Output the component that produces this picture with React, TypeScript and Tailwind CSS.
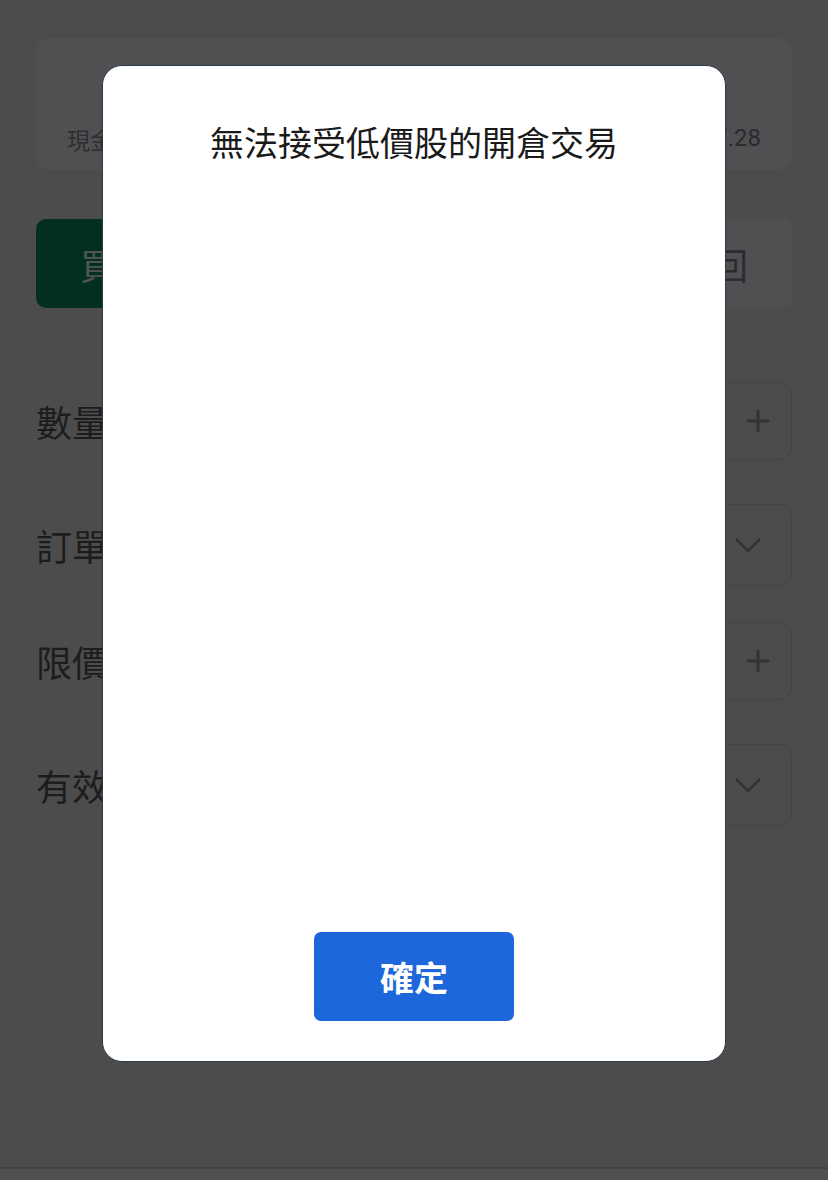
import React from "react";

const font = { fontFamily: '"Noto Sans CJK TC", "Noto Sans", sans-serif' };

function PlusIcon() {
  return (
    <svg width="26" height="26" viewBox="0 0 26 26" fill="none" stroke="#333335" strokeWidth="3" strokeLinecap="round">
      <path d="M13 3v20M3 13h20" />
    </svg>
  );
}

function ChevronIcon() {
  return (
    <svg width="28" height="16" viewBox="0 0 28 16" fill="none" stroke="#333335" strokeWidth="2.6" strokeLinecap="round" strokeLinejoin="round">
      <path d="M3 3l11 11L25 3" />
    </svg>
  );
}

function Row({ label, mt, h, icon }: { label: string; mt: string; h: string; icon: "plus" | "chev" }) {
  return (
    <div className={`flex items-center justify-between ${mt}`}>
      <div className="text-[36px] text-[#1c1c1e] leading-none">{label}</div>
      <div
        className={`w-[470px] ${h} rounded-[12px] border border-[#444446] flex items-center justify-end ${
          icon === "plus" ? "pr-[20px]" : "pr-[29px]"
        }`}
      >
        {icon === "plus" ? <PlusIcon /> : <ChevronIcon />}
      </div>
    </div>
  );
}

export default function App() {
  return (
    <div style={font} className="relative w-[828px] h-[1180px] bg-[#4c4c4c] overflow-hidden flex flex-col">
      <div className="px-[36px] pt-[38px]">
        <div className="h-[132px] rounded-[14px] bg-[#505053] flex items-end justify-between px-[31px] pb-[14px]">
          <span className="text-[23px] text-[#2e2e30]">現金結餘</span>
          <span className="text-[24px] text-[#2a2a2c]" style={{ fontFamily: '"Roboto", "Noto Sans", sans-serif' }}>1,234,567.28</span>
        </div>

        <div className="mt-[49px] h-[89px] rounded-[10px] bg-[#505053] flex">
          <div className="w-[160px] rounded-[10px] bg-[#03301e] flex items-center justify-center text-[36px] text-[#505552]">買入</div>
          <div className="flex-1 flex items-center justify-center text-[36px] text-[#2c2c2e]">賣出</div>
          <div className="flex-1 flex items-center justify-center text-[36px] text-[#2c2c2e]">沽空</div>
          <div className="w-[160px] flex items-center justify-center text-[36px] text-[#2c2c2e]">買回</div>
        </div>

        <Row label="數量" mt="mt-[74px]" h="h-[78px]" icon="plus" />
        <Row label="訂單類型" mt="mt-[44px]" h="h-[82px]" icon="chev" />
        <Row label="限價" mt="mt-[36px]" h="h-[78px]" icon="plus" />
        <Row label="有效期" mt="mt-[44px]" h="h-[82px]" icon="chev" />
      </div>

      <div className="mt-auto h-[13px] border-t-2 border-[#434343] bg-[#4f4f4f]" />

      <div className="absolute left-[102px] top-[65px] w-[624px] h-[997px] bg-white rounded-[20px] border border-[#2b3a4a] flex flex-col items-center justify-between pt-[50px] pb-[40px]">
        <div className="text-[34px] leading-[1.5] text-[#1a1a1a]">無法接受低價股的開倉交易</div>
        <button className="w-[200px] h-[89px] rounded-[7px] bg-[#1e67da] text-white text-[34px] font-bold">確定</button>
      </div>
    </div>
  );
}
